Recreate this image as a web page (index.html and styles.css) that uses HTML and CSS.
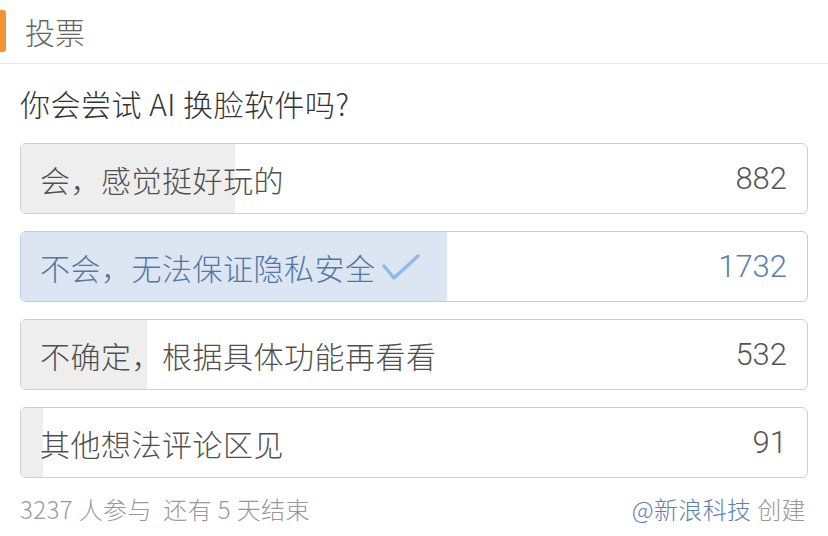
FILE: index.html
```html
<!DOCTYPE html>
<html lang="zh-CN">
<head>
<meta charset="utf-8">
<link rel="stylesheet" href="styles.css">
</head>
<body>
<div class="poll">
  <div class="head"><span class="bar"></span><span class="title">投票</span></div>
  <div class="question">你会尝试 AI 换脸软件吗?</div>
  <div class="options">
    <div class="opt"><div class="fill" style="width:27.2%"></div><span class="label">会，感觉挺好玩的</span><span class="num">882</span></div>
    <div class="opt sel"><div class="fill" style="width:54.2%"></div><span class="label">不会，无法保证隐私安全<svg class="check" width="38" height="30" viewBox="0 0 38 30"><path d="M2 14 L12 26 L36 4" fill="none" stroke="#8cbbea" stroke-width="3.5" stroke-linecap="round" stroke-linejoin="round"/></svg></span><span class="num">1732</span></div>
    <div class="opt"><div class="fill" style="width:16%"></div><span class="label">不确定，根据具体功能再看看</span><span class="num">532</span></div>
    <div class="opt"><div class="fill" style="width:2.8%"></div><span class="label">其他想法评论区见</span><span class="num">91</span></div>
  </div>
  <div class="foot">
    <span class="meta">3237 人参与&nbsp;&nbsp;还有 5 天结束</span>
    <span class="by"><span class="user">@新浪科技</span> 创建</span>
  </div>
</div>
</body>
</html>
```
FILE: styles.css
```css
* { box-sizing: border-box; }
body {
  margin: 0;
  background: #fff;
  font-family: "Noto Sans CJK SC", "Noto Sans", sans-serif;
  font-weight: 300;
  color: #333;
}
.poll { width: 828px; height: 536px; overflow: hidden; }
.head {
  height: 64px;
  border-bottom: 1px solid #e8e8e8;
  display: flex;
  align-items: center;
  gap: 19px;
  padding-bottom: 2px;
}
.bar {
  width: 6px;
  height: 42px;
  background: #f4922f;
  border-radius: 0 3px 3px 0;
}
.title { font-size: 30px; color: #666; line-height: 1; }
.question {
  font-size: 30px;
  line-height: 1;
  color: #333;
  letter-spacing: 0.5px;
  padding: 24px 0 0 20px;
  height: 79px;
}
.options {
  display: flex;
  flex-direction: column;
  gap: 17px;
  padding: 0 20px;
}
.opt {
  position: relative;
  height: 71px;
  border: 1px solid #cfcfcf;
  border-radius: 6px;
  overflow: hidden;
  display: flex;
  align-items: center;
  justify-content: space-between;
  padding: 0 20px 0 19px;
  color: #505050;
}
.opt .fill {
  position: absolute;
  left: 0; top: 0; bottom: 0;
  background: #eeeeee;
}
.opt .label, .opt .num { position: relative; font-size: 30px; line-height: 1; display: flex; align-items: center; }
.opt .label { letter-spacing: 0.5px; }
.opt .num { font-family: Roboto, "Noto Sans", sans-serif; font-weight: 300; font-size: 31px; color: #555; }
.opt.sel { border-color: #b9cee6; color: #5276a8; }
.opt.sel .fill { background: #dce6f2; }
.opt.sel .num { color: #5a7db3; }
.check { margin-left: 6px; }
.foot {
  display: flex;
  justify-content: space-between;
  align-items: center;
  padding: 19px 22px 0 20px;
  font-size: 24px;
  letter-spacing: 0.4px;
  color: #999;
  line-height: 1;
}
.user { color: #5b80b5; }
```
